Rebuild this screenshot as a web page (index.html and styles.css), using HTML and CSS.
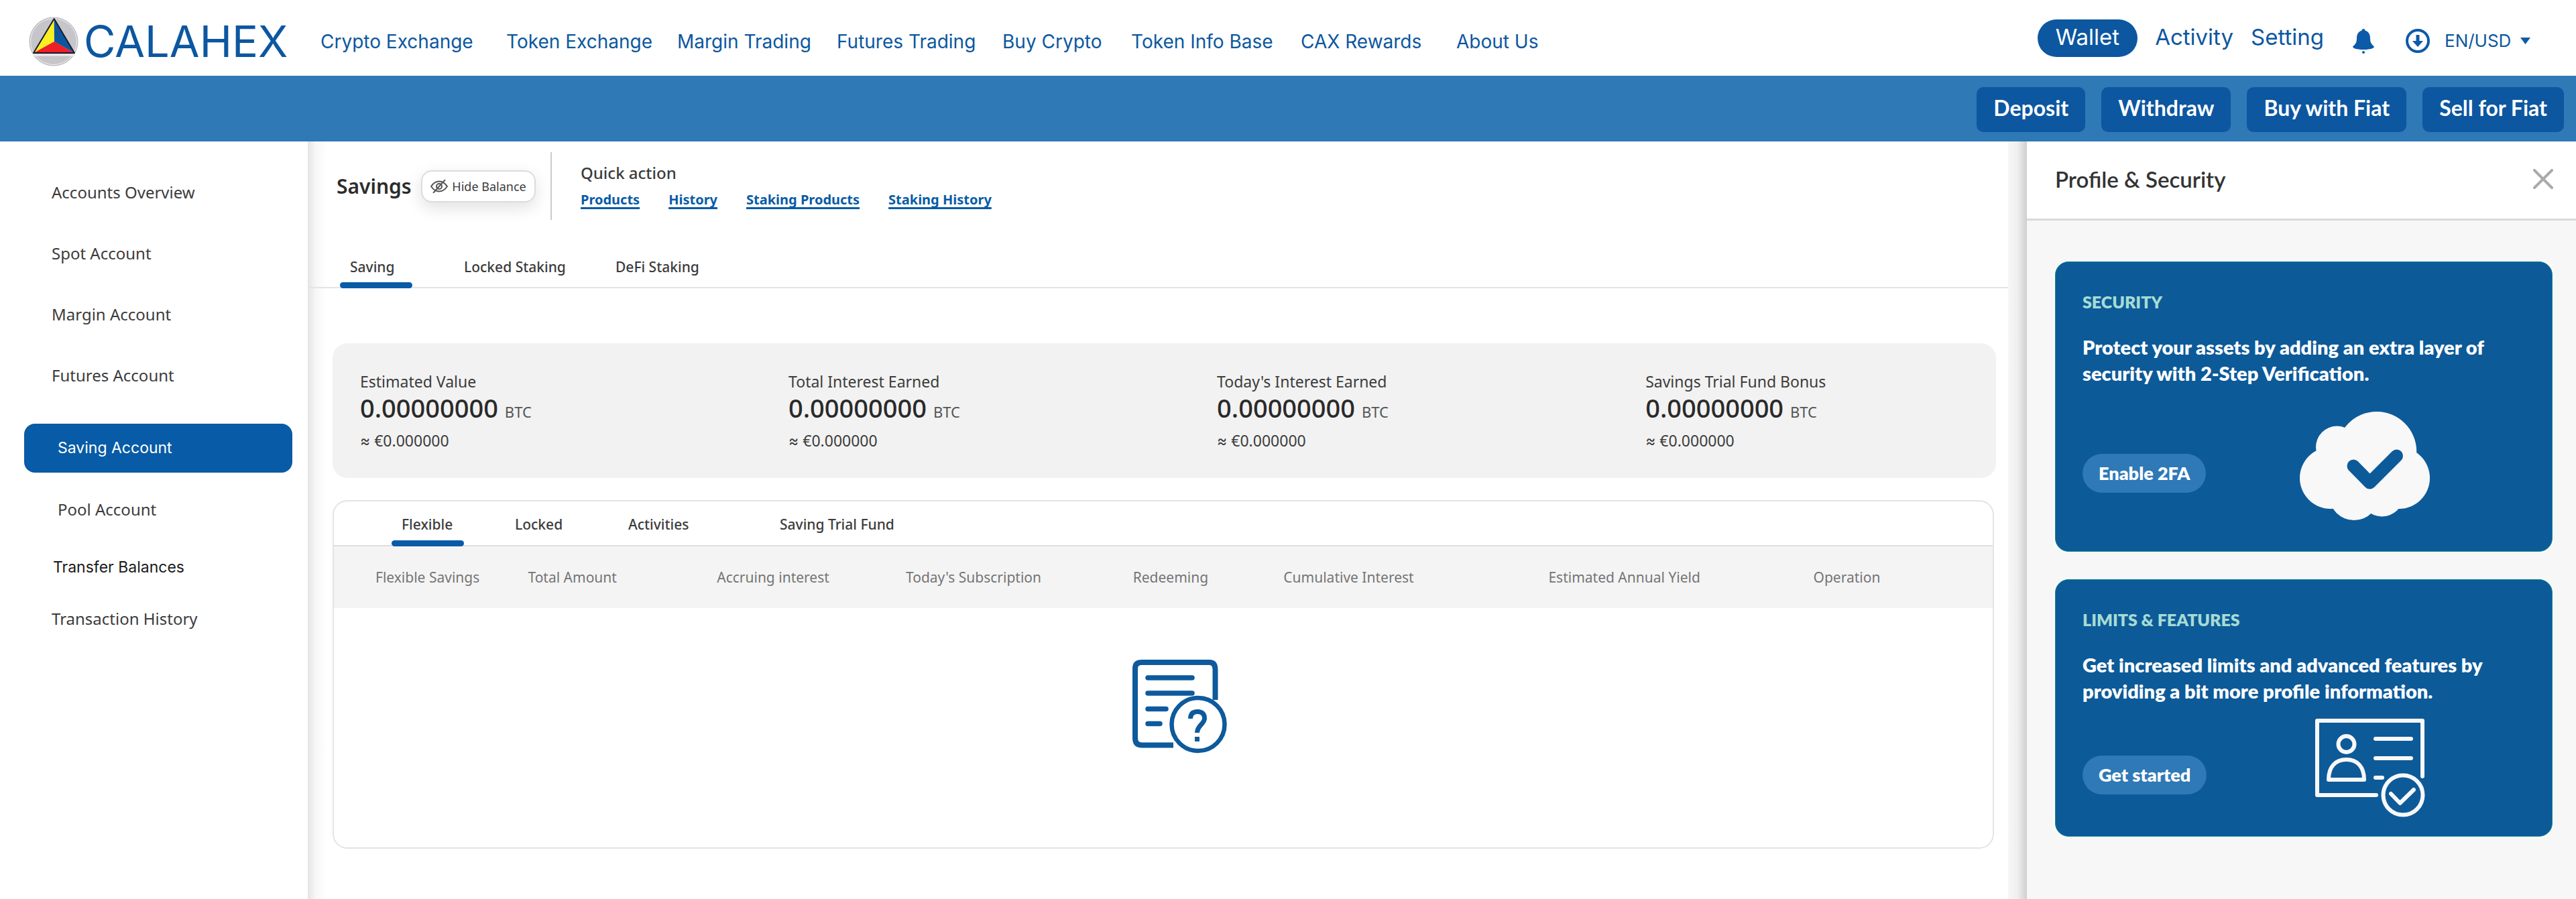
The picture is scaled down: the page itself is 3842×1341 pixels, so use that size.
FILE: index.html
```html
<!DOCTYPE html>
<html lang="en">
<head>
  <meta charset="utf-8">
  <meta name="viewport" content="width=device-width, initial-scale=1">
  <title>Calahex – Saving Account</title>
  <link rel="stylesheet" href="styles.css">
</head>
<body>
  <header class="topbar">
    <a class="brand" href="#">
      <svg class="brand-mark" viewBox="0 0 74 74" aria-hidden="true">
        <circle cx="37" cy="37" r="36" fill="#c6c6ca" stroke="#b4b4b8"/>
        <circle cx="37" cy="37" r="34.500" fill="none" stroke="#f2f2f2"/>
        <path d="M6 57H69" stroke="#ececee" stroke-width="3"/>
        <path d="M37.700 3L7 54L38 37Z" fill="#fbee23"/>
        <path d="M37.700 3L68 54L38 37Z" fill="#0c57a0"/>
        <path d="M7 54L38 37L68 54Z" fill="#ee1f25"/>
        <path d="M37.700 3L7 54H68Z" fill="none" stroke="#1b1b2b" stroke-width="2" stroke-linejoin="round"/>
      </svg>
      <span class="brand-name">CALAHEX</span>
    </a>
    <nav class="main-nav" aria-label="Main">
      <a href="#">Crypto Exchange</a>
      <a href="#">Token Exchange</a>
      <a href="#">Margin Trading</a>
      <a href="#">Futures Trading</a>
      <a href="#">Buy Crypto</a>
      <a href="#">Token Info Base</a>
      <a href="#">CAX Rewards</a>
      <a href="#">About Us</a>
    </nav>
    <div class="user-nav">
      <a class="pill" href="#">Wallet</a>
      <a class="user-link" href="#">Activity</a>
      <a class="user-link" href="#">Setting</a>
      <button class="icon-button bell" type="button" aria-label="Notifications">
        <svg viewBox="0 0 34 38" width="34" height="38" aria-hidden="true">
          <path d="M17 1c1.500 0 2.500 1 2.500 2.500C25 5 27 10 27 15c0 7 2 9 6 12.500C33 30.500 25 32 17 32S1 30.500 1 27.500C5 24 7 22 7 15 7 10 9 5 14.500 3.500 14.500 2 15.500 1 17 1Z" fill="#0c5aa8"/>
          <circle cx="17" cy="36" r="2" fill="#0c5aa8"/>
        </svg>
      </button>
      <button class="icon-button download" type="button" aria-label="Downloads">
        <svg viewBox="0 0 36 36" width="36" height="36" aria-hidden="true">
          <circle cx="18" cy="18" r="16" fill="none" stroke="#0c5aa8" stroke-width="4"/>
          <path d="M15.500 9h5v9H26l-8 9-8-9h5.500Z" fill="#0c5aa8"/>
        </svg>
      </button>
      <div class="locale">
        <select aria-label="Language and currency"><option>EN/USD</option></select>
        <svg viewBox="0 0 15 10" width="15" height="10" aria-hidden="true"><path d="M0 0h15L7.500 10Z" fill="#0c5aa8"/></svg>
      </div>
    </div>
  </header>

  <div class="actionbar">
    <button type="button">Deposit</button>
    <button type="button">Withdraw</button>
    <button type="button">Buy with Fiat</button>
    <button type="button">Sell for Fiat</button>
  </div>

  <div class="layout">
    <nav class="sidebar" aria-label="Accounts">
      <a href="#">Accounts Overview</a>
      <a href="#">Spot Account</a>
      <a href="#">Margin Account</a>
      <a href="#">Futures Account</a>
      <a class="active" href="#" aria-current="page">Saving Account</a>
      <a class="nested" href="#">Pool Account</a>
      <a class="strong" href="#">Transfer Balances</a>
      <a class="last" href="#">Transaction History</a>
    </nav>

    <main class="content">
      <div class="page-head">
        <h1>Savings</h1>
        <button class="hide-balance" type="button">
          <svg viewBox="0 0 26 20" width="26" height="20" fill="none" stroke="#555" stroke-width="2" aria-hidden="true">
            <path d="M1 10C5 4 9 2.500 13 2.500S21 4 25 10c-4 6-8 7.500-12 7.500S5 16 1 10Z"/>
            <circle cx="13" cy="10" r="4"/>
            <path d="M22 0L4 20"/>
          </svg>
          <span>Hide Balance</span>
        </button>
        <section class="quick">
          <h2>Quick action</h2>
          <div class="quick-links">
            <a href="#">Products</a>
            <a href="#">History</a>
            <a href="#">Staking Products</a>
            <a href="#">Staking History</a>
          </div>
        </section>
      </div>

      <div class="tabs page-tabs" role="tablist">
        <button class="tab selected" type="button" role="tab" aria-selected="true">Saving</button>
        <button class="tab" type="button" role="tab">Locked Staking</button>
        <button class="tab" type="button" role="tab">DeFi Staking</button>
      </div>

      <div class="content-body">
        <section class="stats">
          <div class="stat">
            <h3>Estimated Value</h3>
            <p class="amount">0.00000000 <small>BTC</small></p>
            <p class="approx"><span>≈</span> €0.000000</p>
          </div>
          <div class="stat">
            <h3>Total Interest Earned</h3>
            <p class="amount">0.00000000 <small>BTC</small></p>
            <p class="approx"><span>≈</span> €0.000000</p>
          </div>
          <div class="stat">
            <h3>Today's Interest Earned</h3>
            <p class="amount">0.00000000 <small>BTC</small></p>
            <p class="approx"><span>≈</span> €0.000000</p>
          </div>
          <div class="stat">
            <h3>Savings Trial Fund Bonus</h3>
            <p class="amount">0.00000000 <small>BTC</small></p>
            <p class="approx"><span>≈</span> €0.000000</p>
          </div>
        </section>

        <section class="holdings">
          <div class="tabs holdings-tabs" role="tablist">
            <button class="tab selected" type="button" role="tab" aria-selected="true">Flexible</button>
            <button class="tab" type="button" role="tab">Locked</button>
            <button class="tab" type="button" role="tab">Activities</button>
            <button class="tab" type="button" role="tab">Saving Trial Fund</button>
          </div>
          <table>
            <thead>
              <tr>
                <th class="col-name" scope="col">Flexible Savings</th>
                <th class="col-mid" scope="col">Total Amount</th>
                <th class="col-mid" scope="col">Accruing interest</th>
                <th class="col-sub" scope="col">Today's Subscription</th>
                <th class="col-redeem" scope="col">Redeeming</th>
                <th class="col-wide" scope="col">Cumulative Interest</th>
                <th class="col-wide" scope="col">Estimated Annual Yield</th>
                <th scope="col">Operation</th>
              </tr>
            </thead>
            <tbody>
              <tr>
                <td class="empty" colspan="8">
                  <svg viewBox="0 0 142 140" width="142" height="140" fill="none" stroke="#0d5a9c" role="img" aria-label="No records">
                    <path d="M123.500 60V15Q123.500 4 115 4H14Q4 4 4 13V117Q4 127.500 14 127.500H61" stroke-width="8"/>
                    <path d="M23 27H89M23 50H89M23 73.500H50M23 95.500H41" stroke-width="7.500" stroke-linecap="round"/>
                    <circle cx="98" cy="96.500" r="39.500" stroke-width="6.500"/>
                    <path d="M86.500 88C86.500 81 90 77.500 97 77.500S107.500 81 107.500 87.500C107.500 96 96.500 98 96.500 109" stroke-width="7"/>
                    <path d="M96.500 115V122" stroke-width="7"/>
                  </svg>
                </td>
              </tr>
            </tbody>
          </table>
        </section>
      </div>
    </main>

    <aside class="panel">
      <div class="panel-head">
        <h2>Profile &amp; Security</h2>
        <button class="icon-button" type="button" aria-label="Close">
          <svg viewBox="0 0 30 30" width="30" height="30" aria-hidden="true"><path d="M2 2L28 28M28 2L2 28" stroke="#aaa" stroke-width="4" stroke-linecap="round"/></svg>
        </button>
      </div>
      <div class="panel-body">
        <section class="promo">
          <h3>SECURITY</h3>
          <p>Protect your assets by adding an extra layer of security with 2-Step Verification.</p>
          <div class="promo-row verify">
            <button type="button">Enable 2FA</button>
            <svg viewBox="0 0 194 162" width="194" height="162" aria-hidden="true">
              <g fill="#f8f8f8">
                <circle cx="114.700" cy="59.500" r="59.500"/>
                <circle cx="55.500" cy="53" r="31.500"/>
                <circle cx="46" cy="99" r="46"/>
                <circle cx="148" cy="99" r="46"/>
                <circle cx="81" cy="125" r="37"/>
                <circle cx="122.500" cy="124" r="32.500"/>
              </g>
              <path d="M80 81L104.500 106L144.500 66" fill="none" stroke="#0d5a99" stroke-width="19" stroke-linecap="round" stroke-linejoin="round"/>
            </svg>
          </div>
        </section>
        <section class="promo">
          <h3>LIMITS &amp; FEATURES</h3>
          <p>Get increased limits and advanced features by providing a bit more profile information.</p>
          <div class="promo-row features">
            <button type="button">Get started</button>
            <svg viewBox="0 0 164 147" width="164" height="147" fill="none" stroke="#f8f8f8" stroke-width="6" stroke-linecap="round" stroke-linejoin="round" aria-hidden="true">
              <path d="M160 86V3H3V114H91"/>
              <circle cx="46.500" cy="38" r="12"/>
              <path d="M20 91C20 72 30 61 46.500 61S73 72 73 91Z"/>
              <path d="M90 30H143M90 59H143M90 88H100"/>
              <circle cx="131" cy="114" r="29.500"/>
              <path d="M113 112L126.500 126L147 106"/>
            </svg>
          </div>
        </section>
      </div>
    </aside>
  </div>
</body>
</html>
```
FILE: styles.css
```css
:root {
  --brand: #0c57a0;
  --bar: #2e79b6;
  --ink: #3c3c3c;
  --line: #e4e4e4;
  --ui: "Inter", "Liberation Sans", sans-serif;
  --text: "Noto Sans", "Open Sans", sans-serif;
  --panel: "Lato", "Open Sans", sans-serif;
}

* { box-sizing: border-box; }

body {
  display: flex;
  flex-direction: column;
  min-height: 100vh;
  margin: 0;
  background: #fff;
  color: var(--ink);
  font-family: var(--text);
}

h1, h2, h3, p { margin: 0; }
a { color: inherit; text-decoration: none; white-space: nowrap; }
svg { display: block; flex: none; }

button {
  margin: 0;
  padding: 0;
  border: 0;
  background: none;
  color: inherit;
  font: inherit;
  white-space: nowrap;
  cursor: pointer;
}

/* Top bar */
.topbar {
  display: flex;
  align-items: center;
  height: 113px;
  padding: 0 68px 0 43px;
  color: var(--brand);
  font-family: var(--ui);
}

.brand {
  display: flex;
  align-items: center;
  gap: 8px;
  width: 435px;
  padding-top: 10px;
}

.brand-mark { width: 74px; height: 74px; }
.brand-name { font-size: 65px; line-height: 74px; }

.main-nav {
  display: grid;
  grid-template-columns: 277px 255px 238px 247px 192px 253px 232px auto;
  padding-top: 10px;
  font-size: 28px;
  line-height: 40px;
}

.user-nav {
  display: flex;
  align-items: center;
  margin-left: auto;
}

.pill {
  padding: 0 27px 4px;
  border-radius: 28px;
  background: var(--brand);
  color: #fff;
  font-size: 33px;
  line-height: 52px;
}

.user-link {
  margin-left: 26px;
  padding-bottom: 4px;
  font-size: 33px;
  line-height: 52px;
}

.bell { margin: 8px 0 0 42px; }
.download { margin: 8px 0 0 46px; }

.locale {
  display: grid;
  align-items: center;
  margin: 8px 0 0 22px;
}

.locale select {
  grid-area: 1 / 1;
  width: 128px;
  padding: 0;
  border: 0;
  background: none;
  color: inherit;
  font-family: inherit;
  font-size: 26px;
  line-height: 36px;
  appearance: none;
}

.locale svg { grid-area: 1 / 1; justify-self: end; pointer-events: none; }

.actionbar {
  display: flex;
  justify-content: flex-end;
  gap: 24px;
  height: 98px;
  padding: 17px 18px 0;
  background: var(--bar);
}

.actionbar button {
  height: 67px;
  padding: 0 25px 6px;
  border-radius: 10px;
  background: var(--brand);
  color: #fff;
  font-family: var(--panel);
  font-size: 32px;
  font-weight: 700;
}

/* Page columns */
.layout {
  display: grid;
  grid-template-columns: 459px 1fr 847px;
  flex: 1;
}

.sidebar {
  display: flex;
  flex-direction: column;
  padding: 30px 23px 30px 36px;
  font-size: 24px;
}

.sidebar a { padding-left: 41px; line-height: 91px; }

.sidebar .active {
  margin: 27px 0 9px;
  padding-left: 50px;
  border-radius: 16px;
  background: #085ba6;
  color: #fff;
  font-family: var(--ui);
  font-size: 23px;
  line-height: 73px;
}

.sidebar .nested { padding-left: 50px; }

.sidebar .strong {
  padding-left: 43px;
  color: #1a1a1a;
  font-family: var(--ui);
  font-size: 23px;
  line-height: 82px;
}

.sidebar .last { line-height: 72px; }

.content {
  background: linear-gradient(90deg, #e4e4e4, #f7f7f7 12px, #fff 28px);
}

.page-head {
  display: flex;
  align-items: center;
  height: 101px;
  margin: 16px 18px 0 43px;
}

h1 { width: 126px; color: #2c2c2c; font-size: 30px; font-weight: 600; }

.hide-balance {
  display: flex;
  align-items: center;
  justify-content: center;
  gap: 6px;
  width: 171px;
  height: 48px;
  border: 2px solid #dcdcdc;
  border-radius: 16px;
  background: #fff;
  box-shadow: 0 8px 24px rgba(0, 0, 0, .12);
  font-size: 18px;
}

.quick {
  display: flex;
  flex-direction: column;
  justify-content: center;
  height: 101px;
  margin-left: 22px;
  padding-left: 43px;
  border-left: 2px solid #ccc;
}

.quick h2 { font-size: 24px; font-weight: 500; line-height: 40px; }

.quick-links {
  display: flex;
  gap: 43px;
  color: #085ba6;
  font-size: 20px;
  font-weight: 700;
  line-height: 40px;
}

.quick-links a {
  text-decoration: underline 3px;
  text-underline-offset: 4px;
  text-decoration-skip-ink: none;
}

/* Tabs */
.tabs {
  display: grid;
  font-size: 21px;
  font-weight: 500;
}

.tab {
  position: relative;
  padding-left: 15px;
  text-align: left;
  line-height: 62px;
}

.tab.selected { width: 108px; }

.tab.selected::after {
  content: "";
  position: absolute;
  right: 0;
  bottom: -2px;
  left: 0;
  height: 9px;
  border-radius: 5px;
  background: #085ba6;
}

.page-tabs {
  grid-template-columns: 170px 226px auto 1fr;
  margin: 40px 0 0 3px;
  padding-left: 45px;
  border-bottom: 2px solid var(--line);
}

.page-tabs .tab { line-height: 60px; }

.content-body { padding: 82px 18px 74px 37px; }

/* Balance summary */
.stats {
  display: grid;
  grid-template-columns: repeat(3, 11fr) 9fr;
  padding: 41px 0 40px 41px;
  border-radius: 22px;
  background: #f2f2f2;
}

.stat h3 { font-size: 23px; font-weight: 400; line-height: 32px; }
.amount { color: #2a2a2a; font-size: 38px; font-weight: 500; line-height: 46px; }
.amount small { color: #555; font-size: 22px; font-weight: 400; line-height: 1; }
.approx { margin-top: 10px; font-size: 23px; line-height: 32px; }
.approx span { font-family: var(--ui); line-height: 1; }

/* Holdings table */
.holdings {
  margin: 33px 3px 0 0;
  overflow: hidden;
  border: 2px solid var(--line);
  border-radius: 22px;
}

.holdings-tabs {
  grid-template-columns: 169px 169px 226px auto 1fr;
  padding: 3px 0 0 86px;
  border-bottom: 2px solid #dedede;
}

table {
  width: 100%;
  border-collapse: collapse;
  table-layout: fixed;
}

th {
  height: 92px;
  padding: 0;
  background: #f4f4f4;
  color: #757575;
  font-size: 21px;
  font-weight: 400;
  text-align: left;
}

.col-name { width: 11.7%; padding-left: 62px; }
.col-mid { width: 11.39%; }
.col-sub { width: 13.69%; }
.col-redeem { width: 9.08%; }
.col-wide { width: 15.97%; }

.empty { padding: 77px 0 140px 50px; }
.empty svg { margin: 0 auto; }

/* Profile panel */
.panel {
  padding-left: 28px;
  background: linear-gradient(90deg, #f7f7f7, #efefef 14px, #cfcfcf 28px, #f7f7f7 28px);
}

.panel-head {
  display: flex;
  align-items: center;
  justify-content: space-between;
  height: 118px;
  padding: 0 34px 4px 42px;
  border-bottom: 3px solid #d9d9d9;
  background: #fff;
}

.panel-head h2 {
  color: #333;
  font-family: var(--panel);
  font-size: 33px;
  font-weight: 600;
}

.panel-body {
  display: flex;
  flex-direction: column;
  gap: 41px;
  padding: 61px 35px 61px 42px;
  font-family: var(--panel);
}

.promo {
  padding: 41px 40px 0;
  border: 1px solid #128a8a;
  border-radius: 20px;
  background: #0d5a99;
  box-shadow: 0 0 0 2px #fff;
  color: #fff;
}

.promo h3 { color: #a5dcd3; font-size: 25px; font-weight: 800; line-height: 36px; }

.promo p {
  max-width: 630px;
  margin-top: 30px;
  font-size: 29px;
  font-weight: 800;
  line-height: 39px;
}

.promo-row { display: flex; align-items: flex-start; }

.promo button {
  height: 58px;
  padding: 0 24px 2px;
  border-radius: 29px;
  background: var(--bar);
  font-size: 27px;
  font-weight: 800;
}

.verify { gap: 140px; padding: 38px 0 46px; }
.verify button { margin-top: 63px; }
.features { gap: 162px; padding: 22px 0 28px; }
.features button { margin-top: 55px; }
```
